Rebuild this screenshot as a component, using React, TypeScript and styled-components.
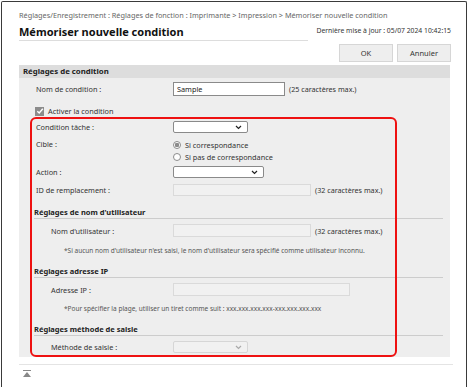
import { createGlobalStyle, styled } from 'styled-components';

const GlobalStyle = createGlobalStyle`
  html, body {
    margin: 0;
    padding: 0;
    background: #ffffff;
  }
  body {
    font-family: 'Noto Sans', 'Open Sans', sans-serif;
    color: #333333;
  }
`;

export default function App() {
  return (
    <>
      <GlobalStyle />
      <Frame>
        <Page>
          <Breadcrumb>
            Réglages/Enregistrement : Réglages de fonction : Imprimante &gt; Impression &gt; Mémoriser
            nouvelle condition
          </Breadcrumb>
          <TitleBar>
            <Title>Mémoriser nouvelle condition</Title>
            <Updated>Dernière mise à jour : 05/07 2024 10:42:15</Updated>
          </TitleBar>
          <Actions>
            <Btn>OK</Btn>
            <Btn>Annuler</Btn>
          </Actions>

          <Panel>
            <PanelHeader>Réglages de condition</PanelHeader>
            <PanelBody>
              <Row $top={0} $h={14}>
                <Label $indent={17}>Nom de condition :</Label>
                <TextInput $w={112} $h={14} defaultValue="Sample" />
                <Hint>(25 caractères max.)</Hint>
              </Row>
              <CheckRow>
                <CheckBox>
                  <svg width="8" height="8" viewBox="0 0 8 8">
                    <path d="M1.3 4.2 L3.2 6 L6.8 1.8" fill="none" stroke="#ffffff" strokeWidth="1.4" />
                  </svg>
                </CheckBox>
                Activer la condition
              </CheckRow>

              <Highlight />

              <Row $top={4} $h={12}>
                <Label $indent={17}>Condition tâche :</Label>
                <Select $w={75} />
              </Row>
              <CibleRow>
                <Label $indent={17}>Cible :</Label>
                <RadioGroup>
                  <RadioLine>
                    <Radio $checked />
                    Si correspondance
                  </RadioLine>
                  <RadioLine>
                    <Radio />
                    Si pas de correspondance
                  </RadioLine>
                </RadioGroup>
              </CibleRow>
              <Row $top={3} $h={12}>
                <Label $indent={17}>Action :</Label>
                <Select $w={91} />
              </Row>
              <Row $top={6} $h={12}>
                <Label $indent={17}>ID de remplacement :</Label>
                <TextInput $w={138} $h={12} disabled />
                <Hint>(32 caractères max.)</Hint>
              </Row>

              <SubHeader $top={11}>Réglages de nom d&apos;utilisateur</SubHeader>
              <Row $top={5} $h={13}>
                <Label $indent={32}>Nom d&apos;utilisateur :</Label>
                <TextInput $w={138} $h={13} disabled />
                <Hint>(32 caractères max.)</Hint>
              </Row>
              <Note $top={9}>
                *Si aucun nom d&apos;utilisateur n&apos;est saisi, le nom d&apos;utilisateur sera spécifié comme
                utilisateur inconnu.
              </Note>

              <SubHeader $top={10}>Réglages adresse IP</SubHeader>
              <Row $top={5} $h={13}>
                <Label $indent={32}>Adresse IP :</Label>
                <TextInput $w={177} $h={13} disabled />
              </Row>
              <Note $top={8}>
                *Pour spécifier la plage, utiliser un tiret comme suit : xxx.xxx.xxx.xxx-xxx.xxx.xxx.xxx
              </Note>

              <SubHeader $top={10}>Réglages méthode de saisie</SubHeader>
              <Row $top={5} $h={12}>
                <Label $indent={32}>Méthode de saisie :</Label>
                <Select $w={75} disabled />
              </Row>
            </PanelBody>
          </Panel>

          <Footer>
            <svg width="10" height="8" viewBox="0 0 10 8">
              <rect x="1" y="0" width="8" height="1" fill="#888888" />
              <path d="M5 2 L9 7 L1 7 Z" fill="#888888" />
            </svg>
          </Footer>
        </Page>
      </Frame>
    </>
  );
}

function Select({ $w, disabled }: { $w: number; disabled?: boolean }) {
  return (
    <SelectBox $w={$w} $disabled={!!disabled}>
      <svg width="7" height="5" viewBox="0 0 7 5">
        <path
          d="M1 1 L3.5 3.5 L6 1"
          fill="none"
          stroke={disabled ? '#aaaaaa' : '#222222'}
          strokeWidth="1.2"
        />
      </svg>
    </SelectBox>
  );
}

const Frame = styled.div`
  margin: 1px 2px 0 1px;
  height: 386px;
  border: 1px solid #3a3a3a;
  border-bottom: none;
  border-radius: 2px 2px 0 0;
  box-sizing: border-box;
  background: #ffffff;
  overflow: hidden;
`;

const Page = styled.div`
  padding: 8px 15px 0 17px;
  position: relative;
`;

const Breadcrumb = styled.div`
  font-size: 7.3px;
  line-height: 11px;
  color: #666666;
  white-space: nowrap;
`;

const TitleBar = styled.div`
  margin-top: 4px;
  display: flex;
  align-items: flex-end;
  justify-content: space-between;
`;

const Title = styled.div`
  flex: 1;
  padding-bottom: 1px;
  border-bottom: 1px solid #dddddd;
  font-size: 11px;
  line-height: 14px;
  font-weight: 700;
  color: #111111;
`;

const Updated = styled.div`
  padding: 0 0 5px 8px;
  font-size: 6.8px;
  line-height: 10px;
  color: #333333;
  white-space: nowrap;
`;

const Actions = styled.div`
  margin-top: 3px;
  display: flex;
  justify-content: flex-end;
  gap: 4px;
`;

const Btn = styled.button`
  width: 54px;
  height: 18px;
  padding: 0;
  border: 1px solid #d6d6d6;
  background: #eeeeee;
  font-family: 'Noto Sans', sans-serif;
  font-size: 7.5px;
  color: #333333;
`;

const Panel = styled.div`
  margin-top: 3px;
  width: 431px;
  background: #eeeeee;
  position: relative;
`;

const PanelHeader = styled.div`
  height: 13px;
  padding-left: 4px;
  background: #dddddd;
  font-size: 7.8px;
  line-height: 13px;
  font-weight: 700;
  color: #222222;
`;

const PanelBody = styled.div`
  padding: 4px 0 4px;
  display: flex;
  flex-direction: column;
  position: relative;
`;

const Highlight = styled.div`
  position: absolute;
  left: 11px;
  top: 39px;
  width: 367px;
  height: 240px;
  border: 2px solid #ee1111;
  border-radius: 6px;
  box-sizing: border-box;
  pointer-events: none;
`;

const Row = styled.div<{ $top: number; $h: number }>`
  margin-top: ${(p) => p.$top}px;
  height: ${(p) => p.$h}px;
  display: flex;
  align-items: center;
`;

const Label = styled.div<{ $indent: number }>`
  width: 154px;
  padding-left: ${(p) => p.$indent}px;
  box-sizing: border-box;
  font-size: 7.3px;
  color: #333333;
  white-space: nowrap;
`;

const TextInput = styled.input<{ $w: number; $h: number }>`
  width: ${(p) => p.$w}px;
  height: ${(p) => p.$h}px;
  box-sizing: border-box;
  padding: 0 3px;
  border: 1px solid ${(p) => (p.disabled ? '#dadada' : '#8a8a8a')};
  background: ${(p) => (p.disabled ? '#f1f1f1' : '#ffffff')};
  font-family: 'Noto Sans', sans-serif;
  font-size: 7.3px;
  color: #222222;
  outline: none;
`;

const Hint = styled.span`
  margin-left: 4px;
  font-size: 7.2px;
  color: #333333;
  white-space: nowrap;
`;

const CheckRow = styled.div`
  margin-top: 9px;
  height: 12px;
  padding-left: 16px;
  display: flex;
  align-items: center;
  gap: 4px;
  font-size: 7.3px;
  color: #333333;
`;

const CheckBox = styled.span`
  width: 9px;
  height: 9px;
  background: #8c8c8c;
  display: flex;
  align-items: center;
  justify-content: center;
`;

const CibleRow = styled.div`
  margin-top: 6px;
  display: flex;
  align-items: flex-start;
  height: 24px;
`;

const RadioGroup = styled.div`
  display: flex;
  flex-direction: column;
`;

const RadioLine = styled.div`
  height: 12px;
  display: flex;
  align-items: center;
  gap: 4px;
  font-size: 7.3px;
  color: #333333;
  white-space: nowrap;
`;

const Radio = styled.span<{ $checked?: boolean }>`
  width: 8px;
  height: 8px;
  border-radius: 50%;
  border: 1px solid #8c8c8c;
  box-sizing: border-box;
  background: ${(p) =>
    p.$checked ? 'radial-gradient(circle, #8c8c8c 0 2px, #ffffff 2.5px)' : '#ffffff'};
`;

const SelectBox = styled.div<{ $w: number; $disabled: boolean }>`
  width: ${(p) => p.$w}px;
  height: 100%;
  box-sizing: border-box;
  padding-right: 5px;
  border: 1px solid ${(p) => (p.$disabled ? '#d6d6d6' : '#8a8a8a')};
  border-radius: 2px;
  background: ${(p) => (p.$disabled ? '#f1f1f1' : '#ffffff')};
  display: flex;
  align-items: center;
  justify-content: flex-end;
`;

const SubHeader = styled.div<{ $top: number }>`
  margin: ${(p) => p.$top}px 7px 0 15px;
  height: 11px;
  border-bottom: 1px solid #cccccc;
  font-size: 7.5px;
  line-height: 10px;
  font-weight: 700;
  color: #222222;
`;

const Note = styled.div<{ $top: number }>`
  margin-top: ${(p) => p.$top}px;
  padding-left: 45px;
  height: 10px;
  font-size: 6.5px;
  line-height: 10px;
  color: #555555;
  white-space: nowrap;
`;

const Footer = styled.div`
  margin-top: 7px;
  width: 431px;
  border-top: 1px solid #e4e4e4;
  padding: 5px 0 0 3px;
  display: flex;
  align-items: flex-start;
`;
